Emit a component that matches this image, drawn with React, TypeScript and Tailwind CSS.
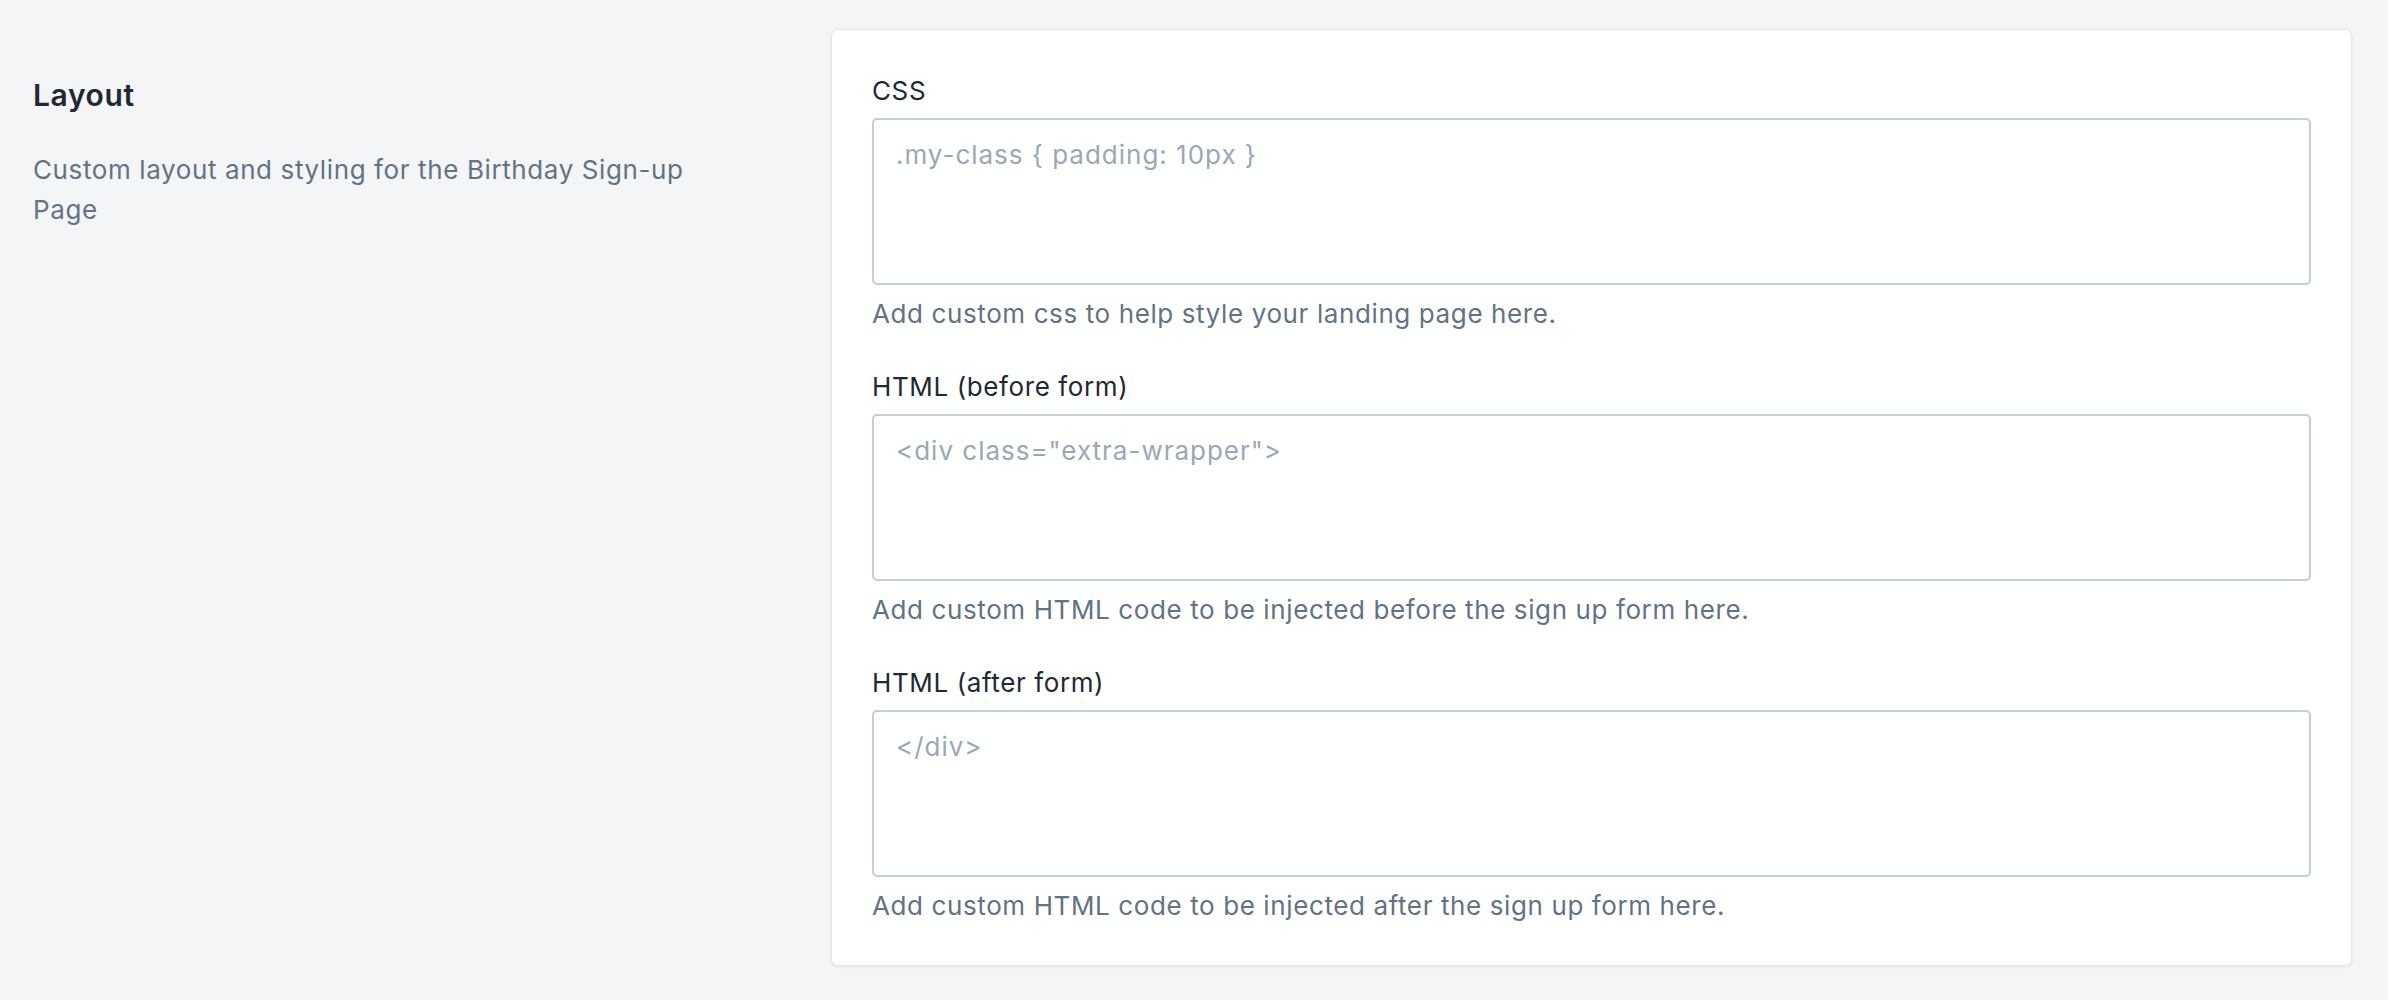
const FIELDS = [
  {
    label: "CSS",
    placeholder: ".my-class { padding: 10px }",
    help: "Add custom css to help style your landing page here.",
  },
  {
    label: "HTML (before form)",
    placeholder: '<div class="extra-wrapper">',
    help: "Add custom HTML code to be injected before the sign up form here.",
  },
  {
    label: "HTML (after form)",
    placeholder: "</div>",
    help: "Add custom HTML code to be injected after the sign up form here.",
  },
];

export default function App() {
  return (
    <div className="flex min-h-screen items-start bg-[#f4f5f7] py-[29px] pr-[36px] font-['Inter',sans-serif] tracking-[0.038em]">
      {/* Section intro */}
      <div className="w-[831px] flex-shrink-0 pl-[33px] pr-[100px] pt-[48px]">
        <h2 className="text-[30px] font-semibold leading-[36px] tracking-[0.02em] text-[#1f2933]">
          Layout
        </h2>
        <p className="mt-[37px] text-[26px] leading-[40px] text-[#627385]">
          Custom layout and styling for the Birthday Sign-up Page
        </p>
      </div>

      {/* Fields card */}
      <div className="flex flex-1 flex-col gap-[43px] rounded-[7px] border border-[#e4e7eb] bg-white px-[40px] pb-[44px] pt-[46px] shadow-[0_1px_3px_rgba(15,23,42,0.08)]">
        {FIELDS.map((field) => (
          <div key={field.label} className="flex flex-col">
            <label className="text-[26px] leading-[30px] text-[#1f2933]">
              {field.label}
            </label>
            <textarea
              placeholder={field.placeholder}
              className="mt-[12px] h-[167px] resize-none rounded-[5px] border-2 border-[#c6ced7] bg-white px-[22px] pt-[20px] text-[26px] leading-[30px] tracking-[0.038em] text-[#1f2933] outline-none placeholder:text-[#9aa8b6]"
            />
            <p className="mt-[14px] text-[26px] leading-[30px] text-[#627385]">
              {field.help}
            </p>
          </div>
        ))}
      </div>
    </div>
  );
}
